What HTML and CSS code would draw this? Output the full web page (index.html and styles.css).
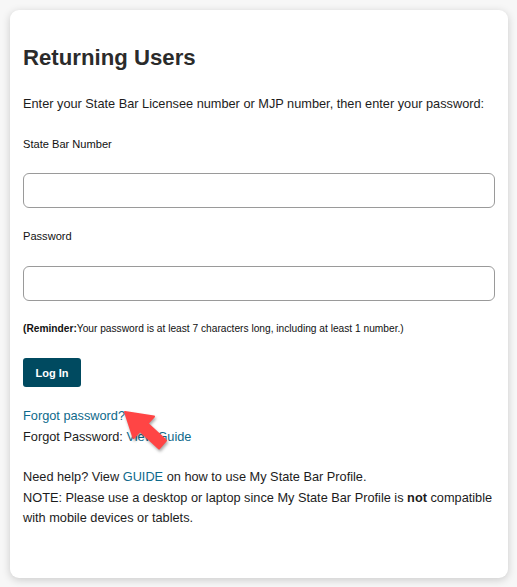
FILE: index.html
```html
<!DOCTYPE html>
<html>
<head>
<meta charset="utf-8">
<link rel="stylesheet" href="styles.css">
</head>
<body>
<div class="card">
  <h2 class="title">Returning Users</h2>
  <p class="intro">Enter your State Bar Licensee number or MJP number, then enter your password:</p>
  <label class="label">State Bar Number</label>
  <input class="field" type="text">
  <label class="label">Password</label>
  <input class="field" type="password">
  <p class="reminder"><b>(Reminder:</b>Your password is at least 7 characters long, including at least 1 number.)</p>
  <button class="btn">Log In</button>
  <div class="forgot">
    <a class="link" href="#">Forgot password?</a><br>
    Forgot Password: <a class="link" href="#">View Guide</a>
    <svg class="arrow" width="56" height="50" viewBox="0 0 56 50">
      <path d="M4 5 L33 9.5 L26.5 16.5 L45 33.5 L38 41.5 L19 24 L12.5 31 Z" fill="#ff4545" stroke="#ff4545" stroke-width="2" stroke-linejoin="round"/>
    </svg>
  </div>
  <p class="help">Need help? View <a class="link" href="#">GUIDE</a> on how to use My State Bar Profile.<br>NOTE: Please use a desktop or laptop since My State Bar Profile is <b>not</b> compatible with mobile devices or tablets.</p>
</div>
</body>
</html>
```
FILE: styles.css
```css
html, body {
  margin: 0;
  padding: 0;
  background: #f7f7f7;
}
body {
  padding: 10px 9px 9px 10px;
  font-family: "Liberation Sans", Arial, sans-serif;
  color: #1c1c1c;
}
.card {
  box-sizing: border-box;
  width: 498px;
  height: 568px;
  background: #fff;
  border-radius: 9px;
  box-shadow: 0 2px 8px rgba(0,0,0,0.18);
  padding: 35px 13px 0 13px;
  display: flex;
  flex-direction: column;
  align-items: flex-start;
}
.title {
  margin: 0;
  font-size: 22.2px;
  line-height: 26px;
  font-weight: bold;
  color: #2b2b2b;
}
.intro {
  margin: 23px 0 0 0;
  font-size: 12.75px;
  line-height: 20px;
}
.label {
  margin-top: 23px;
  font-size: 11.1px;
  line-height: 14px;
  color: #111;
}
.label + .field { margin-top: 22px; }
.field {
  box-sizing: border-box;
  width: 472px;
  height: 35px;
  border: 1px solid #9a9a9a;
  border-radius: 6px;
  margin: 0;
  padding: 0 8px;
  font-size: 14px;
}
.field + .label { margin-top: 21px; }
.field + .label + .field { margin-top: 23px; }
.reminder {
  margin: 22px 0 0 0;
  font-size: 10.2px;
  line-height: 12px;
  color: #111;
}
.btn {
  margin-top: 23px;
  width: 58px;
  height: 29px;
  border: none;
  border-radius: 3px;
  background: #004a60;
  color: #fff;
  font-family: "Liberation Sans", Arial, sans-serif;
  font-weight: bold;
  font-size: 11px;
  padding: 0;
}
.forgot {
  position: relative;
  margin-top: 18px;
  font-size: 12.75px;
  line-height: 21px;
}
.link {
  color: #0e6a8b;
  text-decoration: none;
}
.arrow {
  position: absolute;
  left: 98px;
  top: 2px;
  filter: drop-shadow(1px 2px 1.5px rgba(0,0,0,0.35));
}
.help {
  margin: 20px 0 0 0;
  font-size: 12.75px;
  line-height: 20.5px;
}
```
